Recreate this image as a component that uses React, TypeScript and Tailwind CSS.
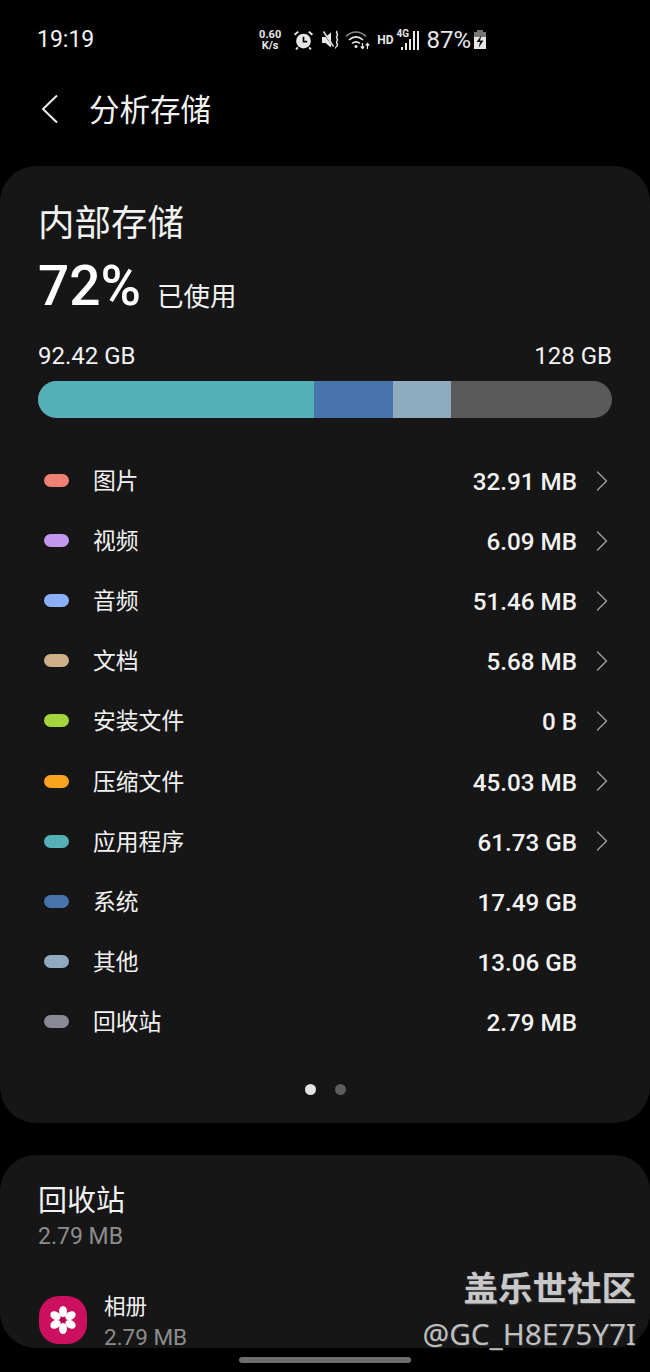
import { ChevronRight } from "lucide-react";

const rows = [
  { name: "图片", size: "32.91 MB", dot: "bg-[#f08072]", arrow: true },
  { name: "视频", size: "6.09 MB", dot: "bg-[#c497ee]", arrow: true },
  { name: "音频", size: "51.46 MB", dot: "bg-[#8cb0f8]", arrow: true },
  { name: "文档", size: "5.68 MB", dot: "bg-[#cdb08a]", arrow: true },
  { name: "安装文件", size: "0 B", dot: "bg-[#a3d63c]", arrow: true },
  { name: "压缩文件", size: "45.03 MB", dot: "bg-[#f9a31e]", arrow: true },
  { name: "应用程序", size: "61.73 GB", dot: "bg-[#55afb7]", arrow: true },
  { name: "系统", size: "17.49 GB", dot: "bg-[#4874ac]", arrow: false },
  { name: "其他", size: "13.06 GB", dot: "bg-[#8fabc0]", arrow: false },
  { name: "回收站", size: "2.79 MB", dot: "bg-[#8a8a96]", arrow: false },
];

const StatusIcons = () => (
  <div className="flex h-[26px] items-center text-[#e8e8e8]">
    <div className="flex w-[26px] flex-col items-center text-[11px] font-bold leading-[11px]">
      <span>0.60</span>
      <span>K/s</span>
    </div>
    {/* Alarm */}
    <svg className="ml-[10px]" width="21" height="22" viewBox="0 0 20 20" fill="none">
      <circle cx="10" cy="11" r="7" fill="#e8e8e8" />
      <path d="M10 7v4.500h3.500" stroke="#000" strokeWidth="1.600" />
      <path d="M1.500 5 5 2M18.500 5 15 2M4.500 17 3 19M15.500 17 17 19" stroke="#e8e8e8" strokeWidth="1.800" />
    </svg>
    {/* Vibrate mute */}
    <svg className="ml-[7px]" width="20" height="22" viewBox="0 0 20 20" fill="none">
      <path d="M1 7h3.500L10 2.500v15L4.500 13H1z" fill="#e8e8e8" />
      <path d="M2 2l11 15" stroke="#000" strokeWidth="1.400" />
      <path d="M2.500 1.500l10 15" stroke="#e8e8e8" strokeWidth="1.400" />
      <path d="M16 1c-2 2 2 3 0 5s2 3 0 5 2 3 0 5-1 2-1 2" stroke="#e8e8e8" strokeWidth="1.500" />
    </svg>
    {/* Wifi */}
    <svg className="ml-[4px]" width="26" height="22" viewBox="0 0 26 20" fill="none">
      <path d="M1 6.500c6-6 14-6 20 0" stroke="#8a8a8a" strokeWidth="1.600" />
      <path d="M4 10c4.500-4 9.500-4 14 0" stroke="#e8e8e8" strokeWidth="1.600" />
      <path d="M7 13.500c2.500-2 5.500-2 8 0" stroke="#e8e8e8" strokeWidth="1.600" />
      <circle cx="11" cy="16.500" r="1.500" fill="#e8e8e8" />
      <path d="M17.500 13v5M15.800 16.500l1.700 2 1.700-2M22.500 19v-5M20.800 15.500l1.700-2 1.700 2" stroke="#e8e8e8" strokeWidth="1.200" />
    </svg>
    <span className="ml-[6px] text-[12px] font-bold">HD</span>
    <div className="relative ml-[3px] h-[22px] w-[25px]">
      <span className="absolute left-0 top-[-1px] text-[10px] font-bold leading-[12px]">4G</span>
      <svg className="absolute left-0 top-0" width="25" height="22" viewBox="0 0 25 22" fill="#e8e8e8">
        <rect x="5" y="18" width="2" height="3" />
        <rect x="9" y="14" width="2" height="7" />
        <rect x="13" y="10" width="2" height="11" />
        <rect x="17" y="2" width="2" height="19" />
        <rect x="21" y="2" width="2" height="19" />
      </svg>
    </div>
    <span className="ml-[5px] text-[24px] leading-[26px]">87%</span>
    <svg className="ml-[2px]" width="14" height="22" viewBox="0 0 14 22">
      <rect x="4" y="1" width="6" height="3" fill="#777" />
      <rect x="1" y="3" width="12" height="5" fill="#777" />
      <rect x="1" y="8" width="12" height="12" fill="#e8e8e8" />
      <path d="M8.500 6 3.500 13H7l-1.500 6L10.500 11.500H7z" fill="#111" />
    </svg>
  </div>
);

export default function App() {
  return (
    <div className="relative h-[1372px] w-[650px] overflow-hidden bg-black font-['Roboto','Noto_Sans_CJK_SC',sans-serif] text-[#f2f2f2]">
      {/* Status bar */}
      <div className="flex h-[80px] items-start justify-between pl-[37px] pr-[163px] pt-[27px]">
        <span className="text-[23px] leading-[26px]">19:19</span>
        <StatusIcons />
      </div>

      {/* Header */}
      <div className="flex h-[86px] items-start pl-[40px] pt-[9px]">
        <svg className="mt-[5px]" width="20" height="30" viewBox="0 0 20 30" fill="none">
          <path d="M17 1.500 3 15l14 13.500" stroke="#efefef" strokeWidth="2" />
        </svg>
        <h1 className="ml-[29px] text-[30.5px] leading-[44px]">分析存储</h1>
      </div>

      {/* Internal storage card */}
      <section className="h-[957px] rounded-[36px] bg-[#161616] px-[38px] pt-[36px]">
        <h2 className="text-[36.5px] leading-[44px]">内部存储</h2>
        <div className="mt-[10px] flex h-[60px] items-end">
          <span className="text-[55px] font-medium leading-[60px] text-white">72%</span>
          <span className="mb-[1px] ml-[16px] text-[26.500px] leading-[36px]">已使用</span>
        </div>
        <div className="mt-[26px] flex items-center justify-between text-[24px] leading-[28px]">
          <span>92.42 GB</span>
          <span>128 GB</span>
        </div>
        <div className="mt-[11px] flex h-[37px] overflow-hidden rounded-full bg-[#5a5a5a]">
          <div className="w-[276px] bg-[#55afb7]" />
          <div className="w-[79px] bg-[#4874ac]" />
          <div className="w-[58px] bg-[#8fabc0]" />
        </div>

        <ul className="mt-[34px]">
          {rows.map((row) => (
            <li key={row.name} className="flex h-[60.1px] items-center">
              <span className={`mb-[3px] ml-[6px] h-[13px] w-[25px] rounded-full ${row.dot}`} />
              <span className="ml-[24px] text-[22.800px] leading-[30px]">{row.name}</span>
              <span className="ml-auto text-[24.200px] font-medium leading-[30px]">{row.size}</span>
              <span className="mb-[3px] ml-[15px] flex w-[20px] items-center justify-center">
                {row.arrow && <ChevronRight size={36} strokeWidth={0.9} className="shrink-0 text-[#a0a0a0]" />}
              </span>
            </li>
          ))}
        </ul>

        <div className="mt-[31px] flex justify-center gap-[19px]">
          <span className="h-[11px] w-[11px] rounded-full bg-[#e4e4e4]" />
          <span className="h-[11px] w-[11px] rounded-full bg-[#5c5c5c]" />
        </div>
      </section>

      {/* Recycle bin card */}
      <section className="mt-[32px] h-[193px] rounded-[36px] bg-[#161616] px-[38px] pt-[27px]">
        <h2 className="text-[29px] leading-[38px]">回收站</h2>
        <p className="mt-[3px] text-[23px] leading-[28px] text-[#8c8c8c]">2.79 MB</p>
        <div className="mt-[27px] flex items-start">
          <div className="ml-[1px] mt-[18px] flex h-[48px] w-[48px] items-center justify-center rounded-[20px] bg-[#cc0f5f]">
            <svg width="30" height="30" viewBox="0 0 30 30">
              <g fill="#fff">
                <ellipse cx="15" cy="6.500" rx="4" ry="5.500" />
                <ellipse cx="15" cy="23.500" rx="4" ry="5.500" />
                <ellipse cx="7.500" cy="10.700" rx="4" ry="5.500" transform="rotate(-60 7.500 10.700)" />
                <ellipse cx="22.500" cy="10.700" rx="4" ry="5.500" transform="rotate(60 22.500 10.700)" />
                <ellipse cx="7.500" cy="19.300" rx="4" ry="5.500" transform="rotate(60 7.500 19.300)" />
                <ellipse cx="22.500" cy="19.300" rx="4" ry="5.500" transform="rotate(-60 22.500 19.300)" />
              </g>
              <circle cx="15" cy="15" r="2.500" fill="#a80c4e" />
            </svg>
          </div>
          <div className="ml-[17px] flex flex-col pt-[15px]">
            <span className="text-[21.500px] leading-[28px]">相册</span>
            <span className="mt-[6px] text-[22.500px] leading-[20px] text-[#8c8c8c]">2.79 MB</span>
          </div>
        </div>
      </section>

      {/* Watermark */}
      <div className="absolute right-[14px] top-[1267px] flex flex-col items-end">
        <span className="text-[34.500px] font-bold leading-[44px] text-[#c8c8c8] [text-shadow:1px_1px_1px_#444]">盖乐世社区</span>
        <span className="mt-[3px] font-['Noto_Sans',sans-serif] text-[29.700px] leading-[40px] text-[#c0c0c0] [text-shadow:1px_1px_1px_#333]">@GC_H8E75Y7I</span>
      </div>

      {/* Home pill */}
      <div className="absolute left-[239px] top-[1357px] h-[6px] w-[172px] rounded-full bg-[#6e6e6e]" />
    </div>
  );
}
